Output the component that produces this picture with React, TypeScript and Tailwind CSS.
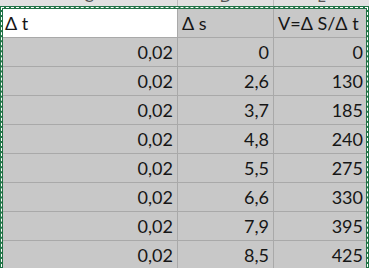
const ROWS = [
  ["0,02", "0", "0"],
  ["0,02", "2,6", "130"],
  ["0,02", "3,7", "185"],
  ["0,02", "4,8", "240"],
  ["0,02", "5,5", "275"],
  ["0,02", "6,6", "330"],
  ["0,02", "7,9", "395"],
  ["0,02", "8,5", "425"],
];

const font = { fontFamily: "Lato, 'Open Sans', sans-serif" };

export default function App() {
  return (
    <div className="w-[369px] h-[268px] overflow-hidden bg-[#c8c8c8] text-[#161616]" style={font}>
      {/* column headers, cut off at the top */}
      <div className="flex h-[6px] overflow-hidden bg-[#e1e1e1] text-[15px] text-[#555]">
        <div className="w-[178px] border-r border-[#bdbdbd] flex justify-center">
          <span className="-mt-[14px] leading-[20px]">C</span>
        </div>
        <div className="w-[96px] border-r border-[#bdbdbd] flex justify-center">
          <span className="-mt-[14px] leading-[20px]">D</span>
        </div>
        <div className="flex-1 flex justify-center">
          <span className="-mt-[14px] leading-[20px]">E</span>
        </div>
      </div>

      {/* copied range with marching-ants border */}
      <div className="border-[3px] border-[#217346] outline-1 outline-dashed outline-white -outline-offset-2 text-[18px]">
        <div className="flex h-[29px] border-b border-[#a9a9a9] bg-[#c8c8c8]">
          <div className="w-[175px] border-r border-[#a9a9a9] bg-white px-[2px] flex items-center">Δ t</div>
          <div className="w-[96px] border-r border-[#a9a9a9] px-[4px] flex items-center">Δ s</div>
          <div className="flex-1 px-[4px] flex items-center">V=Δ S/Δ t</div>
        </div>
        {ROWS.map((r, i) => (
          <div key={i} className="flex h-[29px] border-b border-[#a9a9a9] bg-[#c8c8c8]">
            <div className="w-[175px] border-r border-[#a9a9a9] px-[4px] flex items-center justify-end">{r[0]}</div>
            <div className="w-[96px] border-r border-[#a9a9a9] px-[4px] flex items-center justify-end">{r[1]}</div>
            <div className="flex-1 px-[3px] flex items-center justify-end">{r[2]}</div>
          </div>
        ))}
      </div>
    </div>
  );
}
